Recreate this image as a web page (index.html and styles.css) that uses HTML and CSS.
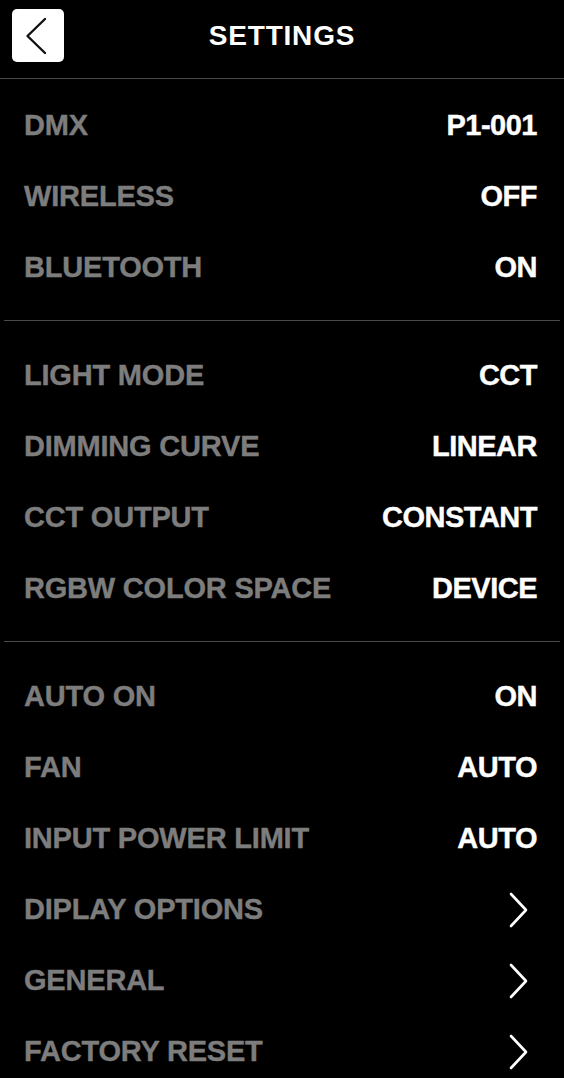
FILE: index.html
```html
<!DOCTYPE html>
<html lang="en">
<head>
    <meta charset="UTF-8">
    <meta name="viewport" content="width=device-width, initial-scale=1.0">
    <link rel="stylesheet" href="styles.css">
</head>
<body>
    <header class="top-bar">
        <button class="back-btn" type="button" aria-label="Back">
            <svg width="52" height="53" viewBox="0 0 52 53">
                <path d="M33 10 L15.5 27 L33 44" fill="none" stroke="#111" stroke-width="2.4" stroke-linecap="round" stroke-linejoin="round" />
            </svg>
        </button>
        <h1 class="title">SETTINGS</h1>
        <div></div>
    </header>

    <section class="group first">
        <div class="row"><span class="label">DMX</span><span class="value">P1-001</span></div>
        <div class="row"><span class="label">WIRELESS</span><span class="value">OFF</span></div>
        <div class="row"><span class="label">BLUETOOTH</span><span class="value">ON</span></div>
    </section>

    <section class="group">
        <div class="row"><span class="label">LIGHT MODE</span><span class="value">CCT</span></div>
        <div class="row"><span class="label">DIMMING CURVE</span><span class="value">LINEAR</span></div>
        <div class="row"><span class="label">CCT OUTPUT</span><span class="value">CONSTANT</span></div>
        <div class="row"><span class="label">RGBW COLOR SPACE</span><span class="value">DEVICE</span></div>
    </section>

    <section class="group last">
        <div class="row"><span class="label">AUTO ON</span><span class="value">ON</span></div>
        <div class="row"><span class="label">FAN</span><span class="value">AUTO</span></div>
        <div class="row"><span class="label">INPUT POWER LIMIT</span><span class="value">AUTO</span></div>
        <div class="row">
            <span class="label">DIPLAY OPTIONS</span>
            <svg class="arrow" width="20" height="36" viewBox="0 0 20 36"><path d="M3 2 L18 18 L3 34" /></svg>
        </div>
        <div class="row">
            <span class="label">GENERAL</span>
            <svg class="arrow" width="20" height="36" viewBox="0 0 20 36"><path d="M3 2 L18 18 L3 34" /></svg>
        </div>
        <div class="row">
            <span class="label">FACTORY RESET</span>
            <svg class="arrow" width="20" height="36" viewBox="0 0 20 36"><path d="M3 2 L18 18 L3 34" /></svg>
        </div>
    </section>
</body>
</html>
```

FILE: styles.css
```css
body {
    margin: 0;
    background-color: #000;
    font-family: "Liberation Sans", Arial, sans-serif;
    font-weight: bold;
    overflow: hidden;
}

.top-bar {
    display: grid;
    grid-template-columns: 1fr auto 1fr;
    align-items: center;
    height: 78px;
    border-bottom: 1px solid #4a4a4a;
}

.back-btn {
    width: 52px;
    height: 53px;
    margin-left: 12px;
    margin-top: -8px;
    padding: 0;
    border: none;
    border-radius: 5px;
    background-color: #fff;
    cursor: pointer;
}

.back-btn svg {
    display: block;
}

.title {
    margin: 0 0 6px 0;
    color: #fff;
    font-size: 28px;
    letter-spacing: 0.8px;
}

.group {
    margin: 0 4px 0 4px;
    padding: 19px 0 17px 0;
    border-bottom: 1px solid #4a4a4a;
}

.group.first {
    padding-top: 11px;
}

.group.last {
    border-bottom: none;
}

.row {
    display: flex;
    justify-content: space-between;
    align-items: center;
    height: 71px;
    padding: 0 23px 0 20px;
    font-size: 29px;
}

.label {
    color: #7d7d7d;
    letter-spacing: -0.2px;
    -webkit-text-stroke: 0.4px #7d7d7d;
}

.value {
    color: #fff;
    letter-spacing: -0.5px;
    -webkit-text-stroke: 0.4px #fff;
}

.arrow {
    margin-right: 9px;
}

.arrow path {
    fill: none;
    stroke: #fff;
    stroke-width: 2.6;
    stroke-linecap: round;
    stroke-linejoin: round;
}
```
